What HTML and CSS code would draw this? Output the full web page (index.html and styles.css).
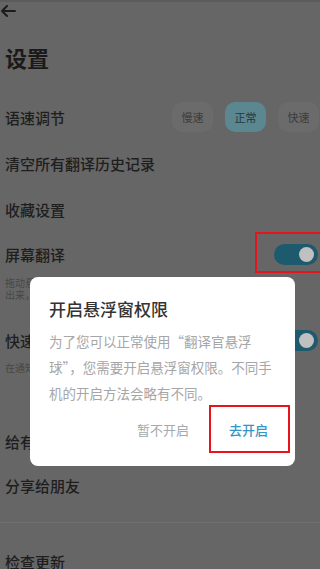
FILE: index.html
```html
<!DOCTYPE html>
<html lang="zh-CN">
<head>
<meta charset="utf-8">
<link rel="stylesheet" href="styles.css">
</head>
<body>
<div class="page">
  <div class="topbar">
    <svg class="back" width="16" height="12" viewBox="0 0 16 12"><path d="M15 6H2M7 1L2 6L7 11" fill="none" stroke="#1c1c1c" stroke-width="2" stroke-linecap="round" stroke-linejoin="round"/></svg>
  </div>
  <h1 class="title">设置</h1>

  <div class="row">
    <span class="label">语速调节</span>
    <div class="chips">
      <span class="chip">慢速</span>
      <span class="chip active">正常</span>
      <span class="chip">快速</span>
    </div>
  </div>
  <div class="row">
    <span class="label">清空所有翻译历史记录</span>
    <span class="chev"></span>
  </div>
  <div class="row">
    <span class="label">收藏设置</span>
    <span class="chev"></span>
  </div>

  <div class="item item-screen">
    <div class="row row-tight">
      <span class="label">屏幕翻译</span>
      <span class="toggle"><span class="knob"></span></span>
    </div>
    <p class="sub">拖动悬浮球到需要翻译的文字上即可翻译<br>出来，支持多种语言</p>
  </div>

  <div class="item item-quick">
    <div class="row row-tight">
      <span class="label">快速翻译</span>
      <span class="toggle"><span class="knob"></span></span>
    </div>
    <p class="sub">在通知栏中快速打开翻译</p>
  </div>

  <div class="row row-tight">
    <span class="label">给有道翻译官好评</span>
    <span class="chev"></span>
  </div>
  <div class="row row-tight">
    <span class="label">分享给朋友</span>
    <span class="chev"></span>
  </div>
  <div class="divider"></div>
  <div class="row section-row">
    <span class="label">检查更新</span>
    <span class="chev"></span>
  </div>
</div>

<div class="dialog">
  <h2 class="dialog-title">开启悬浮窗权限</h2>
  <p class="dialog-body">为了您可以正常使用“翻译官悬浮<br>球”，您需要开启悬浮窗权限。不同手<br>机的开启方法会略有不同。</p>
  <div class="actions">
    <span class="btn btn-cancel">暂不开启</span>
    <span class="btn btn-ok">去开启</span>
  </div>
</div>

<div class="mark mark-toggle"></div>
<div class="mark mark-btn"></div>
</body>
</html>
```

FILE: styles.css
```css
html, body {
  margin: 0;
  padding: 0;
}
body {
  width: 320px;
  height: 569px;
  overflow: hidden;
  position: relative;
  background: #666666;
  font-family: "Noto Sans CJK SC", "Noto Sans", sans-serif;
  color: #1e1e1e;
  border-top: 2px solid #5b5b5b;
  box-sizing: border-box;
}
.page {
  width: 320px;
}
.topbar {
  height: 18px;
  display: flex;
  align-items: center;
}
.back {
  display: block;
  margin-left: 0;
}
.title {
  margin: 22px 0 0 5px;
  font-size: 22px;
  line-height: 30px;
  font-weight: 700;
  color: #1a1a1a;
}
.row {
  height: 46px;
  display: flex;
  align-items: center;
  padding: 0 2px 0 5px;
}
.title + .row {
  margin-top: 22px;
}
.row-tight {
  height: 44px;
}
.label {
  font-size: 15px;
  font-weight: 500;
  color: #1e1e1e;
  white-space: nowrap;
}
.chips {
  margin-left: auto;
  margin-right: -1px;
  display: flex;
  gap: 12px;
}
.chip {
  height: 30px;
  line-height: 30px;
  padding: 0 9.5px;
  font-size: 11px;
  border-radius: 10px;
  background: #6b6b6b;
  color: #3c3c3c;
}
.chip.active {
  background: #5a8790;
  color: #24363b;
}
.chev {
  margin-left: auto;
  margin-right: -8px;
  width: 7px;
  height: 7px;
  border-top: 1.5px solid #4a4a4a;
  border-right: 1.5px solid #4a4a4a;
  transform: rotate(45deg);
}
.toggle {
  margin-left: auto;
  width: 44px;
  height: 21px;
  border-radius: 11px;
  background: #1d5a6d;
  position: relative;
}
.knob {
  position: absolute;
  right: 4px;
  top: 3px;
  width: 15px;
  height: 15px;
  border-radius: 50%;
  background: #c0c0c0;
}
.sub {
  margin: 0;
  padding-left: 5px;
  font-size: 10px;
  line-height: 12px;
  color: #464646;
  white-space: nowrap;
}
.item-screen {
  padding-bottom: 17px;
}
.item-screen .sub {
  margin-top: 1px;
}
.item-quick {
  padding-bottom: 45px;
}
.divider {
  margin-top: 15px;
  height: 1px;
  background: #6f6f6f;
}
.section-row {
  margin-top: 15px;
}

.dialog {
  position: absolute;
  left: 30px;
  top: 275px;
  width: 265px;
  box-sizing: border-box;
  padding: 20px 19px 26px 19px;
  background: #ffffff;
  border-radius: 8px;
}
.dialog-title {
  margin: 0;
  font-size: 17px;
  line-height: 24px;
  font-weight: 500;
  color: #333333;
}
.dialog-body {
  margin: 7px 0 0 0;
  font-size: 13.5px;
  line-height: 26px;
  color: #a6a6a6;
  white-space: nowrap;
}
.actions {
  margin-top: 14px;
  display: flex;
  justify-content: flex-end;
  gap: 24px;
}
.btn {
  font-size: 13px;
  line-height: 20px;
  padding: 0 8px;
}
.btn-cancel {
  color: #a3a9ae;
}
.btn-ok {
  color: #3596c6;
  font-weight: 500;
}

.mark {
  position: absolute;
  border: 2px solid #e8141c;
  box-sizing: border-box;
}
.mark-toggle {
  left: 255px;
  top: 230px;
  width: 75px;
  height: 41px;
}
.mark-btn {
  left: 209px;
  top: 403px;
  width: 81px;
  height: 48px;
}
```
